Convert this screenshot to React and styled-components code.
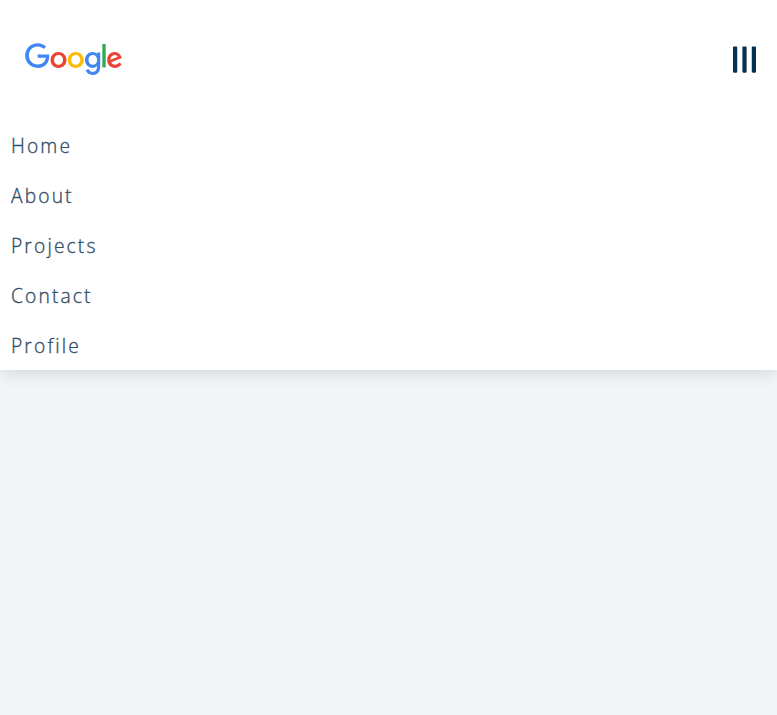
import React, { useState } from 'react';
import styled, { createGlobalStyle } from 'styled-components';
import { FaBars } from 'react-icons/fa';

const GlobalStyle = createGlobalStyle`
  *, *::before, *::after { box-sizing: border-box; margin: 0; padding: 0; }
  body {
    background: #f1f5f8;
    font-family: "Open Sans", "Noto Sans", sans-serif;
  }
`;

const Page = styled.div`
  min-height: 100vh;
  background: #f1f5f8;
`;

const Nav = styled.nav`
  position: relative;
  z-index: 1;
  background: #fff;
  height: 370px;
  box-shadow: 0 5px 15px rgba(0, 0, 0, 0.1);
`;

const Header = styled.div`
  display: flex;
  align-items: center;
  justify-content: space-between;
  height: 120px;
  padding: 0 17px 1px 25px;
`;

const Logo = styled.svg`
  display: block;
  width: 98px;
  height: 33px;
`;

const Toggle = styled.button`
  display: flex;
  border: 0;
  background: transparent;
  color: #063251;
  font-size: 30px;
  cursor: pointer;
  transform: translate(-0.5px, -0.4px) rotate(${(p) => (p.$open ? 90 : 0)}deg);
`;

const Links = styled.ul`
  list-style: none;
`;

const NavLink = styled.a`
  display: flex;
  align-items: center;
  height: 50px;
  padding-left: 11px;
  color: #324d67;
  font-size: 19.2px;
  font-weight: 300;
  -webkit-text-stroke: 0.35px currentColor;
  letter-spacing: 2.15px;
  text-decoration: none;
`;

const links = ['Home', 'About', 'Projects', 'Contact', 'Profile'];

function GoogleLogo() {
  return (
    <Logo viewBox="0 0 272 92" preserveAspectRatio="xMinYMin meet" role="img" aria-label="Google">
      <path fill="#EA4335" d="M115.75 47.18c0 12.77-9.99 22.18-22.25 22.18s-22.25-9.41-22.25-22.18C71.25 34.32 81.24 25 93.5 25s22.25 9.32 22.25 22.18zm-9.74 0c0-7.98-5.79-13.44-12.51-13.44S80.99 39.2 80.99 47.18c0 7.9 5.79 13.44 12.51 13.44s12.51-5.55 12.51-13.44z" />
      <path fill="#FBBC05" d="M163.75 47.18c0 12.77-9.99 22.18-22.25 22.18s-22.25-9.41-22.25-22.18c0-12.85 9.99-22.18 22.25-22.18s22.25 9.32 22.25 22.18zm-9.74 0c0-7.98-5.79-13.44-12.51-13.44s-12.51 5.46-12.51 13.44c0 7.9 5.79 13.44 12.51 13.44s12.51-5.55 12.51-13.44z" />
      <path fill="#4285F4" d="M209.75 26.34v39.82c0 16.38-9.66 23.07-21.08 23.07-10.75 0-17.22-7.19-19.66-13.07l8.48-3.53c1.51 3.61 5.21 7.87 11.17 7.87 7.31 0 11.84-4.51 11.84-13v-3.19h-.34c-2.18 2.69-6.38 5.04-11.68 5.04-11.09 0-21.25-9.66-21.25-22.09 0-12.52 10.16-22.26 21.25-22.26 5.29 0 9.49 2.35 11.68 4.96h.34v-3.61h9.25zm-8.56 20.92c0-7.81-5.21-13.52-11.84-13.52-6.72 0-12.35 5.71-12.35 13.52 0 7.73 5.63 13.36 12.35 13.36 6.63 0 11.84-5.63 11.84-13.36z" />
      <path fill="#34A853" d="M225 3v65h-9.5V3h9.5z" />
      <path fill="#EA4335" d="M262.02 54.48l7.56 5.04c-2.44 3.61-8.32 9.83-18.48 9.83-12.6 0-22.01-9.74-22.01-22.18 0-13.19 9.49-22.18 20.92-22.18 11.51 0 17.14 9.16 18.98 14.11l1.01 2.52-29.65 12.28c2.27 4.45 5.8 6.72 10.75 6.72 4.96 0 8.4-2.44 10.92-6.14zm-23.27-7.98l19.82-8.23c-1.09-2.77-4.37-4.7-8.23-4.7-4.95 0-11.84 4.37-11.59 12.93z" />
      <path fill="#4285F4" d="M35.29 41.41V32H67c.31 1.64.47 3.58.47 5.68 0 7.06-1.93 15.79-8.15 22.01-6.05 6.3-13.78 9.66-24.02 9.66C16.32 69.35.36 53.89.36 34.91.36 15.93 16.32.47 35.3.47c10.5 0 17.98 4.12 23.6 9.49l-6.64 6.64c-4.03-3.78-9.49-6.72-16.97-6.72-13.86 0-24.7 11.17-24.7 25.03 0 13.86 10.84 25.03 24.7 25.03 8.99 0 14.11-3.61 17.39-6.89 2.66-2.66 4.41-6.46 5.1-11.65l-22.49.01z" />
    </Logo>
  );
}

export default function App() {
  const [open, setOpen] = useState(true);
  return (
    <Page>
      <GlobalStyle />
      <Nav>
        <Header>
          <GoogleLogo />
          <Toggle $open={open} onClick={() => setOpen(!open)} aria-label="Toggle menu">
            <FaBars />
          </Toggle>
        </Header>
        {open && (
          <Links>
            {links.map((label) => (
              <li key={label}>
                <NavLink href="#">{label}</NavLink>
              </li>
            ))}
          </Links>
        )}
      </Nav>
    </Page>
  );
}
